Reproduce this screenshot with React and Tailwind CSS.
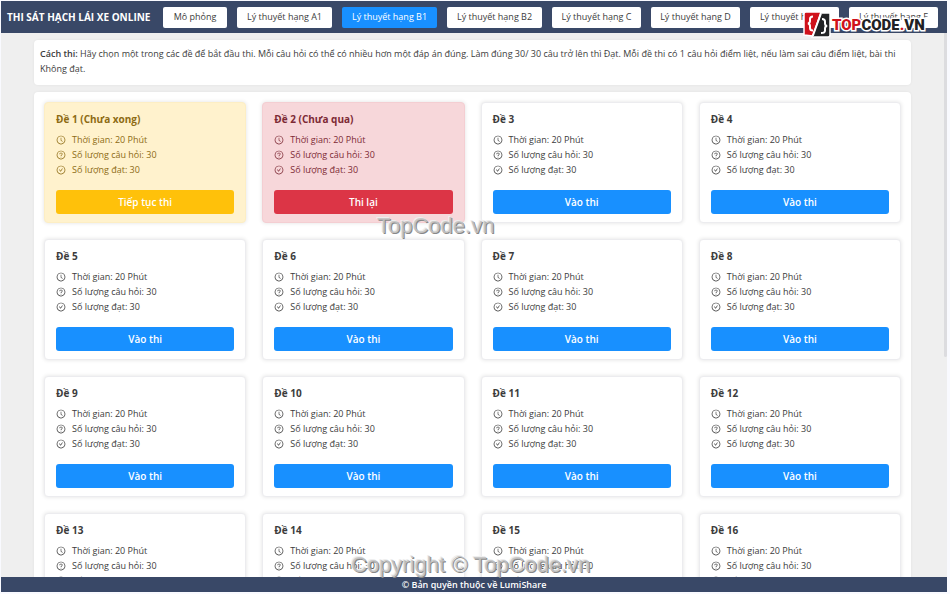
import {
  AiOutlineClockCircle,
  AiOutlineQuestionCircle,
  AiOutlineCheckCircle,
} from "react-icons/ai";

const tabs = [
  { label: "Mô phỏng", width: "w-16" },
  { label: "Lý thuyết hạng A1", width: "w-[95px]" },
  { label: "Lý thuyết hạng B1", width: "w-[95px]", active: true },
  { label: "Lý thuyết hạng B2", width: "w-[95px]" },
  { label: "Lý thuyết hạng C", width: "w-[89px]" },
  { label: "Lý thuyết hạng D", width: "w-[89px]" },
  { label: "Lý thuyết hạng E", width: "w-[89px]" },
  { label: "Lý thuyết hạng F", width: "w-[89px]" },
];

const styles = {
  fresh: {
    card: "bg-white border-[#ececef] text-[#3c3c3c]",
    button: "bg-[#1890ff]",
    action: "Vào thi",
    note: "",
  },
  unfinished: {
    card: "bg-[#fff2cd] border-[#fdeec4] text-[#8d6b14]",
    button: "bg-[#ffc10a]",
    action: "Tiếp tục thi",
    note: " (Chưa xong)",
  },
  failed: {
    card: "bg-[#f7d7da] border-[#f4ced2] text-[#7d2a35]",
    button: "bg-[#dc3546]",
    action: "Thi lại",
    note: " (Chưa qua)",
  },
};

const exams = Array.from({ length: 16 }, (_, i) => ({
  number: i + 1,
  status: i === 0 ? "unfinished" : i === 1 ? "failed" : "fresh",
}));

function Detail({ icon: Icon, children }) {
  return (
    <li className="flex items-center gap-[6px]">
      <Icon className="size-[10px] shrink-0" aria-hidden="true" />
      <span>{children}</span>
    </li>
  );
}

function ExamCard({ number, status }) {
  const s = styles[status];
  return (
    <article className={`rounded border px-[11px] pt-[9px] pb-2 shadow-[0_0_4px_rgba(0,0,0,0.12)] ${s.card}`}>
      <h2 className="text-[10px] leading-[15px] font-bold">
        Đề {number}
        {s.note}
      </h2>
      <ul className="mt-[5px] text-[9px] leading-[15px]">
        <Detail icon={AiOutlineClockCircle}>Thời gian: 20 Phút</Detail>
        <Detail icon={AiOutlineQuestionCircle}>Số lượng câu hỏi: 30</Detail>
        <Detail icon={AiOutlineCheckCircle}>Số lượng đạt: 30</Detail>
      </ul>
      <button
        type="button"
        className={`mt-[13px] block h-6 w-full rounded-[3px] text-[10px] leading-6 font-semibold text-white ${s.button}`}
      >
        {s.action}
      </button>
    </article>
  );
}

function Logo() {
  return (
    <div className="absolute top-[11px] left-[803px] flex items-center gap-px">
      <svg className="h-[27px] w-7" viewBox="0 0 28 27" aria-hidden="true">
        <path d="M3 1H18L10 25L1 24V3Q1 1 3 1Z" fill="#d0121b" stroke="#fff" strokeWidth="1.5" />
        <path d="M18 2H27V24Q27 26 25 26H9Z" fill="#222426" stroke="#fff" strokeWidth="1.5" />
        <path d="M10 5.5Q7 5.500 7 8V10Q7 12 5 12.500Q7 13 7 15V17Q7 19.500 10 19.500" fill="none" stroke="#fff" strokeWidth="2" />
        <path d="M19 8Q22 8 22 10.500V13Q22 14.500 24 15Q22 15.500 22 17V19.500Q22 22 18 22" fill="none" stroke="#fff" strokeWidth="2" />
        <path d="M18 3L10 25" stroke="#fff" strokeWidth="1.500" />
      </svg>
      <span className="font-[Roboto,'Liberation_Sans',sans-serif] text-[15px] leading-[18px] font-black text-[#202124] [paint-order:stroke_fill] [-webkit-text-stroke:3px_#fff]">
        <span className="text-[#d0121b]">TOP</span>CODE<span className="text-[#d0121b]">.</span>VN
      </span>
    </div>
  );
}

export default function App() {
  return (
    <div className="relative flex h-screen flex-col overflow-hidden bg-[#f9faff] pt-px pr-[3px] pb-[2px] pl-px font-['Open_Sans','Noto_Sans',sans-serif] text-[#3c3c3c]">
      <header className="flex h-8 shrink-0 items-center bg-[#394867] pl-[6px]">
        <h1 className="w-[156px] shrink-0 text-[10px] font-bold whitespace-nowrap text-white">
          THI SÁT HẠCH LÁI XE ONLINE
        </h1>
        <nav className="flex gap-[10px]">
          {tabs.map((tab) => (
            <button
              key={tab.label}
              type="button"
              className={`h-[21px] shrink-0 rounded-[2px] text-[9px] whitespace-nowrap ${tab.width} ${
                tab.active ? "bg-[#1890ff] text-white" : "bg-white"
              }`}
            >
              {tab.label}
            </button>
          ))}
        </nav>
      </header>

      <div className="flex min-h-0 flex-1 bg-[#efefef]">
        <main className="min-w-0 flex-1 overflow-hidden px-[33px] pt-[7px]">
          <p className="rounded bg-white px-[6px] pt-[6px] pb-[9px] text-[9px] leading-[15px] shadow-[0_0_3px_rgba(0,0,0,0.06)]">
            <strong className="font-semibold">Cách thi:</strong> Hãy chọn một trong các đề để bắt đầu thi. Mỗi
            câu hỏi có thể có nhiều hơn một đáp án đúng. Làm đúng 30/ 30 câu trở lên thì Đạt. Mỗi đề thi có 1
            câu hỏi điểm liệt, nếu làm sai câu điểm liệt, bài thi Không đạt.
          </p>
          <section className="mt-[7px] grid grid-cols-4 gap-4 rounded bg-white p-[10px] shadow-[0_0_3px_rgba(0,0,0,0.06)]">
            {exams.map((exam) => (
              <ExamCard key={exam.number} {...exam} />
            ))}
          </section>
        </main>
        <div className="h-[324px] w-[3px] rounded-b bg-[#dcdcdf]" />
      </div>

      <footer className="h-[15px] shrink-0 bg-[#394867] text-center text-[9px] leading-[15px] font-semibold text-white">
        © Bản quyền thuộc về LumiShare
      </footer>

      <Logo />
      <div className="pointer-events-none absolute top-[214px] left-[377px] font-['Liberation_Sans',sans-serif] text-[22px] leading-6 text-[#c4c4c4]/90 [text-shadow:1px_1px_0_#888,-1px_-1px_0_#eee]">
        TopCode.vn
      </div>
      <div className="pointer-events-none absolute top-[553px] left-[351px] font-['Liberation_Sans',sans-serif] text-[22px] leading-6 text-[#c4c4c4]/90 [text-shadow:1px_1px_0_#888,-1px_-1px_0_#eee]">
        Copyright © TopCode.vn
      </div>
    </div>
  );
}
